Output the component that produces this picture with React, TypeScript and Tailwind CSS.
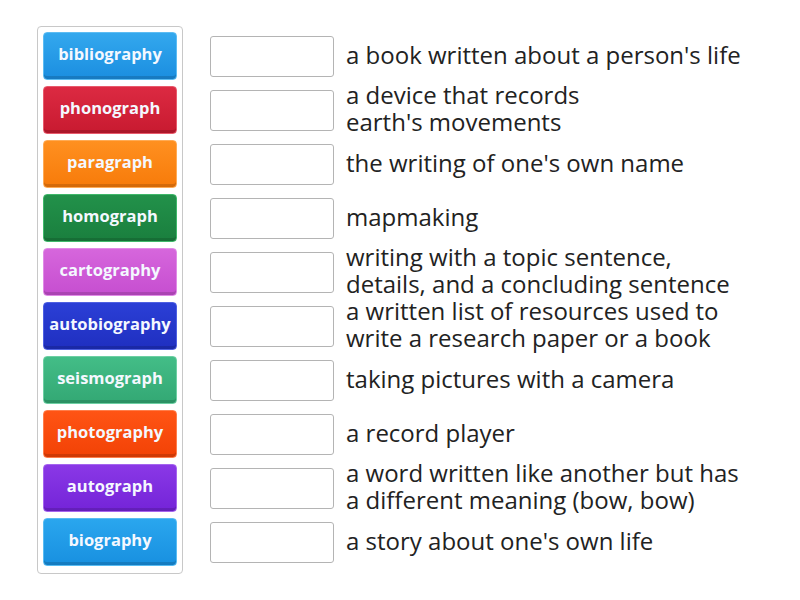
import React from "react";

const tiles: { label: string; cls: string }[] = [
  { label: "bibliography", cls: "bg-[linear-gradient(#33a8ee,#1b8ee0)] border-[#5cbcf3]" },
  { label: "phonograph", cls: "bg-[linear-gradient(#dc2a42,#c81a30)] border-[#e85a6c]" },
  { label: "paragraph", cls: "bg-[linear-gradient(#ff9020,#f77b0a)] border-[#ffab55]" },
  { label: "homograph", cls: "bg-[linear-gradient(#22914a,#1a7f3e)] border-[#3fb86a]" },
  { label: "cartography", cls: "bg-[linear-gradient(#d666dc,#c64ed0)] border-[#e08be6]" },
  { label: "autobiography", cls: "bg-[linear-gradient(#2b3fd6,#1f2fc0)] border-[#4e60e2]" },
  { label: "seismograph", cls: "bg-[linear-gradient(#43bd87,#33a874)] border-[#6dcfa3]" },
  { label: "photography", cls: "bg-[linear-gradient(#ff5414,#f24206)] border-[#ff7d4a]" },
  { label: "autograph", cls: "bg-[linear-gradient(#8a38e6,#7424d8)] border-[#a565ee]" },
  { label: "biography", cls: "bg-[linear-gradient(#2aa6ee,#1890e0)] border-[#58bcf3]" },
];

const defs: string[][] = [
  ["a book written about a person's life"],
  ["a device that records", "earth's movements"],
  ["the writing of one's own name"],
  ["mapmaking"],
  ["writing with a topic sentence,", "details, and a concluding sentence"],
  ["a written list of resources used to", "write a research paper or a book"],
  ["taking pictures with a camera"],
  ["a record player"],
  ["a word written like another but has", "a different meaning (bow, bow)"],
  ["a story about one's own life"],
];

export default function App() {
  return (
    <div
      className="w-[800px] h-[600px] bg-white flex items-start pl-[37px] pt-[26px]"
      style={{ fontFamily: '"Open Sans", "Noto Sans", sans-serif' }}
    >
      <div className="w-[146px] border border-[#c8c8c8] rounded-[4px] px-[5px] pt-[5px] pb-[7px] flex flex-col gap-[6px]">
        {tiles.map((t) => (
          <div
            key={t.label}
            className={`h-[48px] rounded-[4px] border flex items-center justify-center pb-[3px] text-[16.5px] font-bold text-[#f4f8ff] shadow-[inset_0_-3px_0_rgba(0,0,0,0.14)] ${t.cls}`}
          >
            {t.label}
          </div>
        ))}
      </div>
      <div className="ml-[27px] pt-[6px] flex flex-col gap-[6px]">
        {defs.map((d, i) => (
          <div key={i} className="h-[48px] flex items-center">
            <div className="w-[124px] h-[41px] border border-[#b4b4b4] rounded-[3px] bg-white shrink-0" />
            <div className="ml-[12px] mb-[4px] text-[24px] leading-[27px] text-[#222222] whitespace-nowrap">
              {d.map((l, j) => (
                <div key={j}>{l}</div>
              ))}
            </div>
          </div>
        ))}
      </div>
    </div>
  );
}
